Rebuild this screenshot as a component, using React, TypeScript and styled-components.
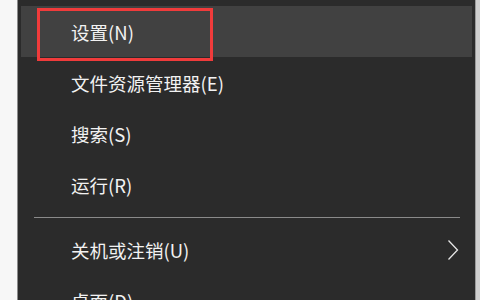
import React from "react";
import styled, { createGlobalStyle } from "styled-components";

const GlobalStyle = createGlobalStyle`
  html, body {
    margin: 0;
    padding: 0;
    width: 480px;
    height: 300px;
    overflow: hidden;
    background: #2b2b2b;
  }
`;

const Screen = styled.div`
  display: flex;
  width: 480px;
  height: 300px;
  overflow: hidden;
`;

const LeftStrip = styled.div`
  width: 17px;
  flex-shrink: 0;
  background: #f7f7f7;
  border-right: 1px solid #8c8c8c;
`;

const RightStrip = styled.div`
  width: 4px;
  flex-shrink: 0;
  background: #cfcfcf;
  border-left: 1px solid #9a9a9a;
`;

const Menu = styled.div`
  flex: 1;
  display: flex;
  flex-direction: column;
  padding: 6px 3px 0;
  background: #2b2b2b;
  font-family: "Noto Sans CJK SC", "Microsoft YaHei", sans-serif;
`;

const Item = styled.div<{ $active?: boolean }>`
  position: relative;
  flex-shrink: 0;
  height: 51px;
  display: flex;
  align-items: center;
  justify-content: space-between;
  padding: 0 13px 0 50px;
  background: ${(p) => (p.$active ? "#414141" : "transparent")};
  color: #f2f2f2;
  font-size: 18.5px;
`;

const Highlight = styled.div`
  position: absolute;
  left: 16px;
  top: 2px;
  width: 176px;
  height: 53px;
  box-sizing: border-box;
  border: 3px solid #f03b3b;
`;

const Separator = styled.div`
  flex-shrink: 0;
  height: 14px;
  display: flex;
  align-items: center;
  padding: 0 12px 0 13px;

  &::after {
    content: "";
    flex: 1;
    height: 1px;
    background: #8a8a8a;
  }
`;

const Chevron = () => (
  <svg width="12" height="22" viewBox="0 0 12 22">
    <polyline
      points="1.5,1.5 10.5,11 1.5,20.5"
      fill="none"
      stroke="#e6e6e6"
      strokeWidth="1.3"
    />
  </svg>
);

const App = () => {
  return (
    <Screen>
      <GlobalStyle />
      <LeftStrip />
      <Menu>
        <Item $active>
          设置(N)
          <Highlight />
        </Item>
        <Item>文件资源管理器(E)</Item>
        <Item>搜索(S)</Item>
        <Item>运行(R)</Item>
        <Separator />
        <Item>
          关机或注销(U)
          <Chevron />
        </Item>
        <Item>桌面(D)</Item>
      </Menu>
      <RightStrip />
    </Screen>
  );
};

export default App;
